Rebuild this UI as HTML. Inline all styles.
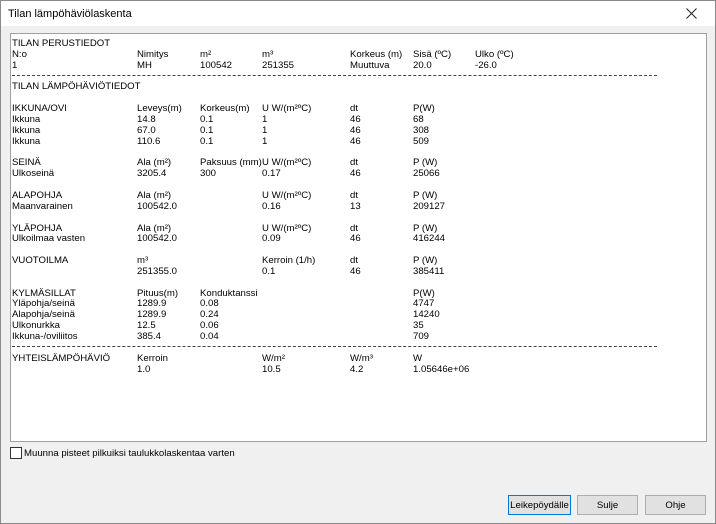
<!DOCTYPE html>
<html><head><meta charset="utf-8"><style>
*{margin:0;padding:0;box-sizing:border-box}
body{width:716px;height:524px;background:#f0f0f0;font-family:"Liberation Sans",Tahoma,sans-serif;font-size:9.6px;color:#000;position:relative;overflow:hidden}
.win{position:absolute;left:0;top:0;width:716px;height:524px;border:1px solid #8a8a8a}
.title{position:absolute;left:1px;top:1px;width:714px;height:25px;background:#fff}
.title span{position:absolute;left:7px;top:7px;font-size:11px}
.x{position:absolute;left:685px;top:7px}
.box{position:absolute;left:10px;top:33px;width:697px;height:409px;background:#fff;border:1px solid #a0a0a0}
.r{position:absolute;left:0;width:716px;height:11px;line-height:11px;white-space:nowrap;margin-top:1.5px}
.r span{position:absolute}
.a{left:12px}.b{left:137px}.c{left:200px}.d{left:262px}.e{left:350px}.f{left:413px}.g{left:475px}
.dash{position:absolute;left:12px;width:645px;border-top:1px dashed #444;height:0}
.cb{position:absolute;left:10px;top:447px;width:12px;height:12px;border:1px solid #333;background:#fff}
.cbl{position:absolute;left:24px;top:448px;font-size:9.6px}
.btn{position:absolute;top:495px;height:20px;background:#e1e1e1;border:1px solid #adadad;font-size:9.6px;text-align:center;line-height:20px}
</style></head><body>
<div class="win"></div>
<div class="title"><span>Tilan lämpöhäviölaskenta</span><svg class="x" width="11" height="11" viewBox="0 0 11 11"><path d="M0.5 0.5L10.5 10.5M10.5 0.5L0.5 10.5" stroke="#222" stroke-width="1"/></svg></div>
<div class="box"></div>

<div class="r" style="top:36.5px"><span class="a">TILAN PERUSTIEDOT</span></div>
<div class="r" style="top:47.4px"><span class="a">N:o</span><span class="b">Nimitys</span><span class="c">m²</span><span class="d">m³</span><span class="e">Korkeus (m)</span><span class="f">Sisä (ºC)</span><span class="g">Ulko (ºC)</span></div>
<div class="r" style="top:58.2px"><span class="a">1</span><span class="b">MH</span><span class="c">100542</span><span class="d">251355</span><span class="e">Muuttuva</span><span class="f">20.0</span><span class="g">-26.0</span></div>
<div class="dash" style="top:75px"></div>
<div class="r" style="top:79.9px"><span class="a">TILAN LÄMPÖHÄVIÖTIEDOT</span></div>

<div class="r" style="top:101.6px"><span class="a">IKKUNA/OVI</span><span class="b">Leveys(m)</span><span class="c">Korkeus(m)</span><span class="d">U W/(m²ºC)</span><span class="e">dt</span><span class="f">P(W)</span></div>
<div class="r" style="top:112.5px"><span class="a">Ikkuna</span><span class="b">14.8</span><span class="c">0.1</span><span class="d">1</span><span class="e">46</span><span class="f">68</span></div>
<div class="r" style="top:123.3px"><span class="a">Ikkuna</span><span class="b">67.0</span><span class="c">0.1</span><span class="d">1</span><span class="e">46</span><span class="f">308</span></div>
<div class="r" style="top:134.2px"><span class="a">Ikkuna</span><span class="b">110.6</span><span class="c">0.1</span><span class="d">1</span><span class="e">46</span><span class="f">509</span></div>

<div class="r" style="top:155.9px"><span class="a">SEINÄ</span><span class="b">Ala (m²)</span><span class="c">Paksuus (mm)</span><span class="d">U W/(m²ºC)</span><span class="e">dt</span><span class="f">P (W)</span></div>
<div class="r" style="top:166.7px"><span class="a">Ulkoseinä</span><span class="b">3205.4</span><span class="c">300</span><span class="d">0.17</span><span class="e">46</span><span class="f">25066</span></div>

<div class="r" style="top:188.4px"><span class="a">ALAPOHJA</span><span class="b">Ala (m²)</span><span class="d">U W/(m²ºC)</span><span class="e">dt</span><span class="f">P (W)</span></div>
<div class="r" style="top:199.3px"><span class="a">Maanvarainen</span><span class="b">100542.0</span><span class="d">0.16</span><span class="e">13</span><span class="f">209127</span></div>

<div class="r" style="top:221px"><span class="a">YLÄPOHJA</span><span class="b">Ala (m²)</span><span class="d">U W/(m²ºC)</span><span class="e">dt</span><span class="f">P (W)</span></div>
<div class="r" style="top:231.8px"><span class="a">Ulkoilmaa vasten</span><span class="b">100542.0</span><span class="d">0.09</span><span class="e">46</span><span class="f">416244</span></div>

<div class="r" style="top:253.5px"><span class="a">VUOTOILMA</span><span class="b">m³</span><span class="d">Kerroin (1/h)</span><span class="e">dt</span><span class="f">P (W)</span></div>
<div class="r" style="top:264.4px"><span class="b">251355.0</span><span class="d">0.1</span><span class="e">46</span><span class="f">385411</span></div>

<div class="r" style="top:286.1px"><span class="a">KYLMÄSILLAT</span><span class="b">Pituus(m)</span><span class="c">Konduktanssi</span><span class="f">P(W)</span></div>
<div class="r" style="top:296.9px"><span class="a">Yläpohja/seinä</span><span class="b">1289.9</span><span class="c">0.08</span><span class="f">4747</span></div>
<div class="r" style="top:307.8px"><span class="a">Alapohja/seinä</span><span class="b">1289.9</span><span class="c">0.24</span><span class="f">14240</span></div>
<div class="r" style="top:318.6px"><span class="a">Ulkonurkka</span><span class="b">12.5</span><span class="c">0.06</span><span class="f">35</span></div>
<div class="r" style="top:329.5px"><span class="a">Ikkuna-/oviliitos</span><span class="b">385.4</span><span class="c">0.04</span><span class="f">709</span></div>
<div class="dash" style="top:346px"></div>
<div class="r" style="top:351.2px"><span class="a">YHTEISLÄMPÖHÄVIÖ</span><span class="b">Kerroin</span><span class="d">W/m²</span><span class="e">W/m³</span><span class="f">W</span></div>
<div class="r" style="top:362px"><span class="b">1.0</span><span class="d">10.5</span><span class="e">4.2</span><span class="f">1.05646e+06</span></div>

<div class="cb"></div><div class="cbl">Muunna pisteet pilkuiksi taulukkolaskentaa varten</div>

<div class="btn" style="left:508px;width:63px;border:1px solid #0078d7">Leikepöydälle</div>
<div class="btn" style="left:577px;width:61px">Sulje</div>
<div class="btn" style="left:645px;width:61px">Ohje</div>
</body></html>
